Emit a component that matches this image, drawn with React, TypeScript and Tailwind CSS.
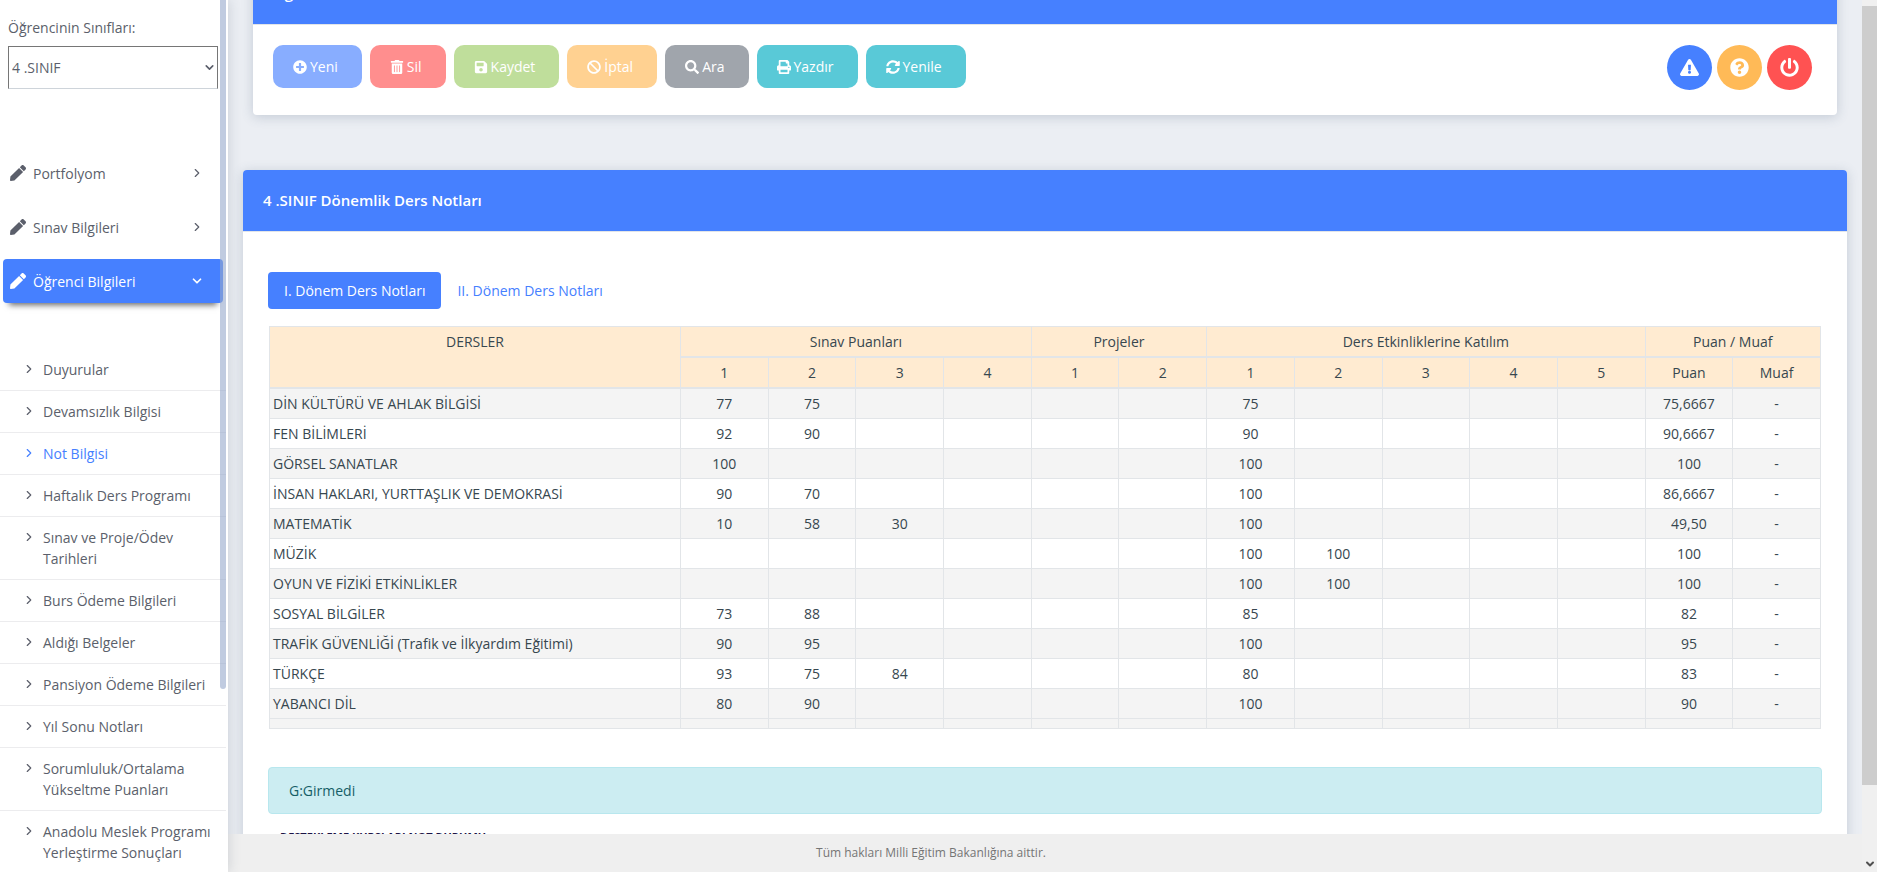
import type { ReactNode } from "react";
import { ChevronDown, ChevronRight } from "lucide-react";
import {
  FaBan,
  FaExclamationTriangle,
  FaPen,
  FaPlusCircle,
  FaPowerOff,
  FaPrint,
  FaQuestionCircle,
  FaSave,
  FaSearch,
  FaSyncAlt,
  FaTrashAlt,
} from "react-icons/fa";

const menu = [
  { label: "Portfolyom", active: false },
  { label: "Sınav Bilgileri", active: false },
  { label: "Öğrenci Bilgileri", active: true },
];

const subMenu = [
  "Duyurular",
  "Devamsızlık Bilgisi",
  "Not Bilgisi",
  "Haftalık Ders Programı",
  "Sınav ve Proje/Ödev Tarihleri",
  "Burs Ödeme Bilgileri",
  "Aldığı Belgeler",
  "Pansiyon Ödeme Bilgileri",
  "Yıl Sonu Notları",
  "Sorumluluk/Ortalama Yükseltme Puanları",
  "Anadolu Meslek Programı Yerleştirme Sonuçları",
];

const actions = [
  { label: "Yeni", icon: FaPlusCircle, color: "bg-[#88adff]" },
  { label: "Sil", icon: FaTrashAlt, color: "bg-[#ff8e8e]" },
  { label: "Kaydet", icon: FaSave, color: "bg-[#bfde9b]" },
  { label: "İptal", icon: FaBan, color: "bg-[#ffd191]" },
  { label: "Ara", icon: FaSearch, color: "bg-[#a0a5ac]" },
  { label: "Yazdır", icon: FaPrint, color: "bg-[#59c9d7]" },
  { label: "Yenile", icon: FaSyncAlt, color: "bg-[#59c9d7]" },
];

const roundActions = [
  { label: "Uyarılar", icon: FaExclamationTriangle, color: "bg-[#4680ff]" },
  { label: "Yardım", icon: FaQuestionCircle, color: "bg-[#ffba57]" },
  { label: "Çıkış", icon: FaPowerOff, color: "bg-[#ff5252]" },
];

const groups = [
  { title: "Sınav Puanları", cols: ["1", "2", "3", "4"] },
  { title: "Projeler", cols: ["1", "2"] },
  { title: "Ders Etkinliklerine Katılım", cols: ["1", "2", "3", "4", "5"] },
  { title: "Puan / Muaf", cols: ["Puan", "Muaf"] },
];

// exams (4), projects (2), participation (5), score, exempt
const grades: { lesson: string; marks: string[] }[] = [
  { lesson: "DİN KÜLTÜRÜ VE AHLAK BİLGİSİ", marks: ["77", "75", "", "", "", "", "75", "", "", "", "", "75,6667", "-"] },
  { lesson: "FEN BİLİMLERİ", marks: ["92", "90", "", "", "", "", "90", "", "", "", "", "90,6667", "-"] },
  { lesson: "GÖRSEL SANATLAR", marks: ["100", "", "", "", "", "", "100", "", "", "", "", "100", "-"] },
  { lesson: "İNSAN HAKLARI, YURTTAŞLIK VE DEMOKRASİ", marks: ["90", "70", "", "", "", "", "100", "", "", "", "", "86,6667", "-"] },
  { lesson: "MATEMATİK", marks: ["10", "58", "30", "", "", "", "100", "", "", "", "", "49,50", "-"] },
  { lesson: "MÜZİK", marks: ["", "", "", "", "", "", "100", "100", "", "", "", "100", "-"] },
  { lesson: "OYUN VE FİZİKİ ETKİNLİKLER", marks: ["", "", "", "", "", "", "100", "100", "", "", "", "100", "-"] },
  { lesson: "SOSYAL BİLGİLER", marks: ["73", "88", "", "", "", "", "85", "", "", "", "", "82", "-"] },
  { lesson: "TRAFİK GÜVENLİĞİ (Trafik ve İlkyardım Eğitimi)", marks: ["90", "95", "", "", "", "", "100", "", "", "", "", "95", "-"] },
  { lesson: "TÜRKÇE", marks: ["93", "75", "84", "", "", "", "80", "", "", "", "", "83", "-"] },
  { lesson: "YABANCI DİL", marks: ["80", "90", "", "", "", "", "100", "", "", "", "", "90", "-"] },
];

function Sidebar() {
  return (
    <aside className="relative z-10 w-57 shrink-0 overflow-hidden bg-white text-[#5b5f6b] shadow-[0_0_12px_rgba(55,71,90,0.2)]">
      <div className="px-2 pt-[17px]">
        <label htmlFor="sinif" className="mb-2 block">
          Öğrencinin Sınıfları:
        </label>
        <div className="relative w-[210px]">
          <select
            id="sinif"
            className="h-[43px] w-full appearance-none border border-[#767676] border-b-[#ced4da] bg-white px-[3px]"
            defaultValue="4"
          >
            <option value="4">4 .SINIF</option>
          </select>
          <ChevronDown size={13} strokeWidth={3} className="pointer-events-none absolute top-[15px] right-0.5" />
        </div>
      </div>

      <nav className="mt-[62px]">
        <ul className="flex flex-col gap-2.5 pr-[5px] pl-[3px]">
          {menu.map((item) => (
            <li key={item.label}>
              <a
                href="#"
                className={
                  item.active
                    ? "flex h-11 items-center gap-[7px] rounded bg-[#4680ff] pr-[19px] pl-[7px] text-white shadow-[0_8px_6px_-6px_rgba(0,0,0,0.6)]"
                    : "flex h-11 items-center gap-[7px] pr-[19px] pl-[7px]"
                }
              >
                <FaPen size={16} className="shrink-0" />
                <span className={item.active ? "flex-1 font-medium" : "flex-1"}>{item.label}</span>
                {item.active ? <ChevronDown size={14} strokeWidth={3} /> : <ChevronRight size={14} />}
              </a>
            </li>
          ))}
        </ul>
        <ul className="mt-[46px]">
          {subMenu.map((label) => (
            <li key={label} className="mr-0.5 border-b border-[#ececee]">
              <a
                href="#"
                className={
                  label === "Not Bilgisi"
                    ? "flex gap-[7px] py-2.5 pr-2 pl-[22px] text-[#4680ff]"
                    : "flex gap-[7px] py-2.5 pr-2 pl-[22px]"
                }
              >
                <ChevronRight size={14} className="mt-[3px] shrink-0" />
                <span>{label}</span>
              </a>
            </li>
          ))}
        </ul>
      </nav>

      {/* scroll thumb */}
      <div className="absolute top-0 right-0.5 h-[79%] w-1.5 rounded-b-full bg-[#96a9cb]/60" />
    </aside>
  );
}

function Card({ title, className, children }: { title: string; className?: string; children: ReactNode }) {
  return (
    <section className={`rounded bg-white shadow-[0_2px_12px_rgba(69,90,120,0.24)] ${className ?? ""}`}>
      <h5 className="rounded-t bg-[#4680ff] px-5 py-5 text-[15px] leading-[21px] font-semibold text-white">
        {title}
      </h5>
      <div className="border-t border-[#e2e5e8]">{children}</div>
    </section>
  );
}

function Toolbar() {
  return (
    <div className="flex items-start justify-between pt-5 pr-[25px] pb-[25px] pl-5">
      <div className="flex gap-2">
        {actions.map(({ label, icon: Icon, color }) => (
          <button
            key={label}
            type="button"
            className={`flex h-[43px] items-center gap-[3px] rounded-[10px] pr-6 pl-5 font-medium text-white ${color}`}
          >
            <Icon className="h-3.5 w-auto" />
            {label}
          </button>
        ))}
      </div>
      <div className="flex gap-[5px]">
        {roundActions.map(({ label, icon: Icon, color }) => (
          <button
            key={label}
            type="button"
            aria-label={label}
            className={`flex size-[45px] items-center justify-center rounded-full text-white ${color}`}
          >
            <Icon className="h-[19px] w-auto" />
          </button>
        ))}
      </div>
    </div>
  );
}

function GradeTable() {
  return (
    <table className="w-full table-fixed border-collapse text-center text-[#37474f]">
      <colgroup>
        <col className="w-[26.5%]" />
        {grades[0].marks.map((_, i) => (
          <col key={i} />
        ))}
      </colgroup>
      <thead className="bg-[#ffebd1]">
        <tr>
          <th rowSpan={2} className="border border-b-2 border-[#e2e5e8] p-1 align-top font-normal">
            DERSLER
          </th>
          {groups.map((g) => (
            <th key={g.title} colSpan={g.cols.length} className="border border-b-2 border-[#e2e5e8] p-1 font-normal">
              {g.title}
            </th>
          ))}
        </tr>
        <tr>
          {groups.map((g) =>
            g.cols.map((c) => (
              <th key={g.title + c} className="border border-b-2 border-[#e2e5e8] p-1 font-normal">
                {c}
              </th>
            ))
          )}
        </tr>
      </thead>
      <tbody>
        {grades.map((row) => (
          <tr key={row.lesson} className="h-[30px] odd:bg-[#f4f4f4]">
            <td className="border border-[#e2e5e8] px-[3px] py-1 text-left">{row.lesson}</td>
            {row.marks.map((m, i) => (
              <td key={i} className="border border-[#e2e5e8] p-1">
                {m}
              </td>
            ))}
          </tr>
        ))}
        <tr className="h-2.5 bg-[#f4f4f4]">
          {Array.from({ length: 14 }, (_, i) => (
            <td key={i} className="border border-[#e2e5e8] p-0" />
          ))}
        </tr>
      </tbody>
    </table>
  );
}

export default function App() {
  return (
    <div className="flex h-screen overflow-hidden bg-[#ebeef3] font-['Open_Sans',sans-serif] text-sm leading-[21px]">
      <Sidebar />

      <div className="flex min-w-0 flex-1 flex-col">
        <main className="min-h-0 flex-1 overflow-hidden px-[15px]">
          {/* page is scrolled a little, the first header is cut */}
          <Card title="Öğrenci Notları" className="mx-2.5 -mt-[37px] mb-[55px]">
            <Toolbar />
          </Card>

          <Card title="4 .SINIF Dönemlik Ders Notları">
            <div className="px-[25px] pt-10 pb-10">
              <div className="mb-[17px] flex" role="tablist">
                <button type="button" role="tab" aria-selected="true" className="rounded bg-[#4680ff] px-4 py-2 text-white">
                  I. Dönem Ders Notları
                </button>
                <button type="button" role="tab" aria-selected="false" className="px-4 py-2 text-[#4680ff]">
                  II. Dönem Ders Notları
                </button>
              </div>
              <div className="px-px">
                <GradeTable />
              </div>
              <div className="mt-[38px] rounded border border-[#b8e7ee] bg-[#ccedf2] px-5 py-3 text-[#155e67]">
                G:Girmedi
              </div>
              <p className="mt-3 px-3 text-[11px] font-bold text-[#1c1446]">DESTEKLEME KURSLARI NOT DURUMU</p>
            </div>
          </Card>
        </main>
        <footer className="flex h-[38px] shrink-0 items-center justify-center bg-[#efefef] pr-57 text-xs text-[#757575]">
          Tüm hakları Milli Eğitim Bakanlığına aittir.
        </footer>
      </div>

      {/* page scroll bar */}
      <div className="flex w-[15px] shrink-0 flex-col bg-[#f0f0f0] pt-1.5">
        <div className="h-[90%] bg-[#cdcdcd]" />
        <ChevronDown size={12} strokeWidth={4} className="mt-auto mb-0.5 self-center text-[#505050]" />
      </div>
    </div>
  );
}
